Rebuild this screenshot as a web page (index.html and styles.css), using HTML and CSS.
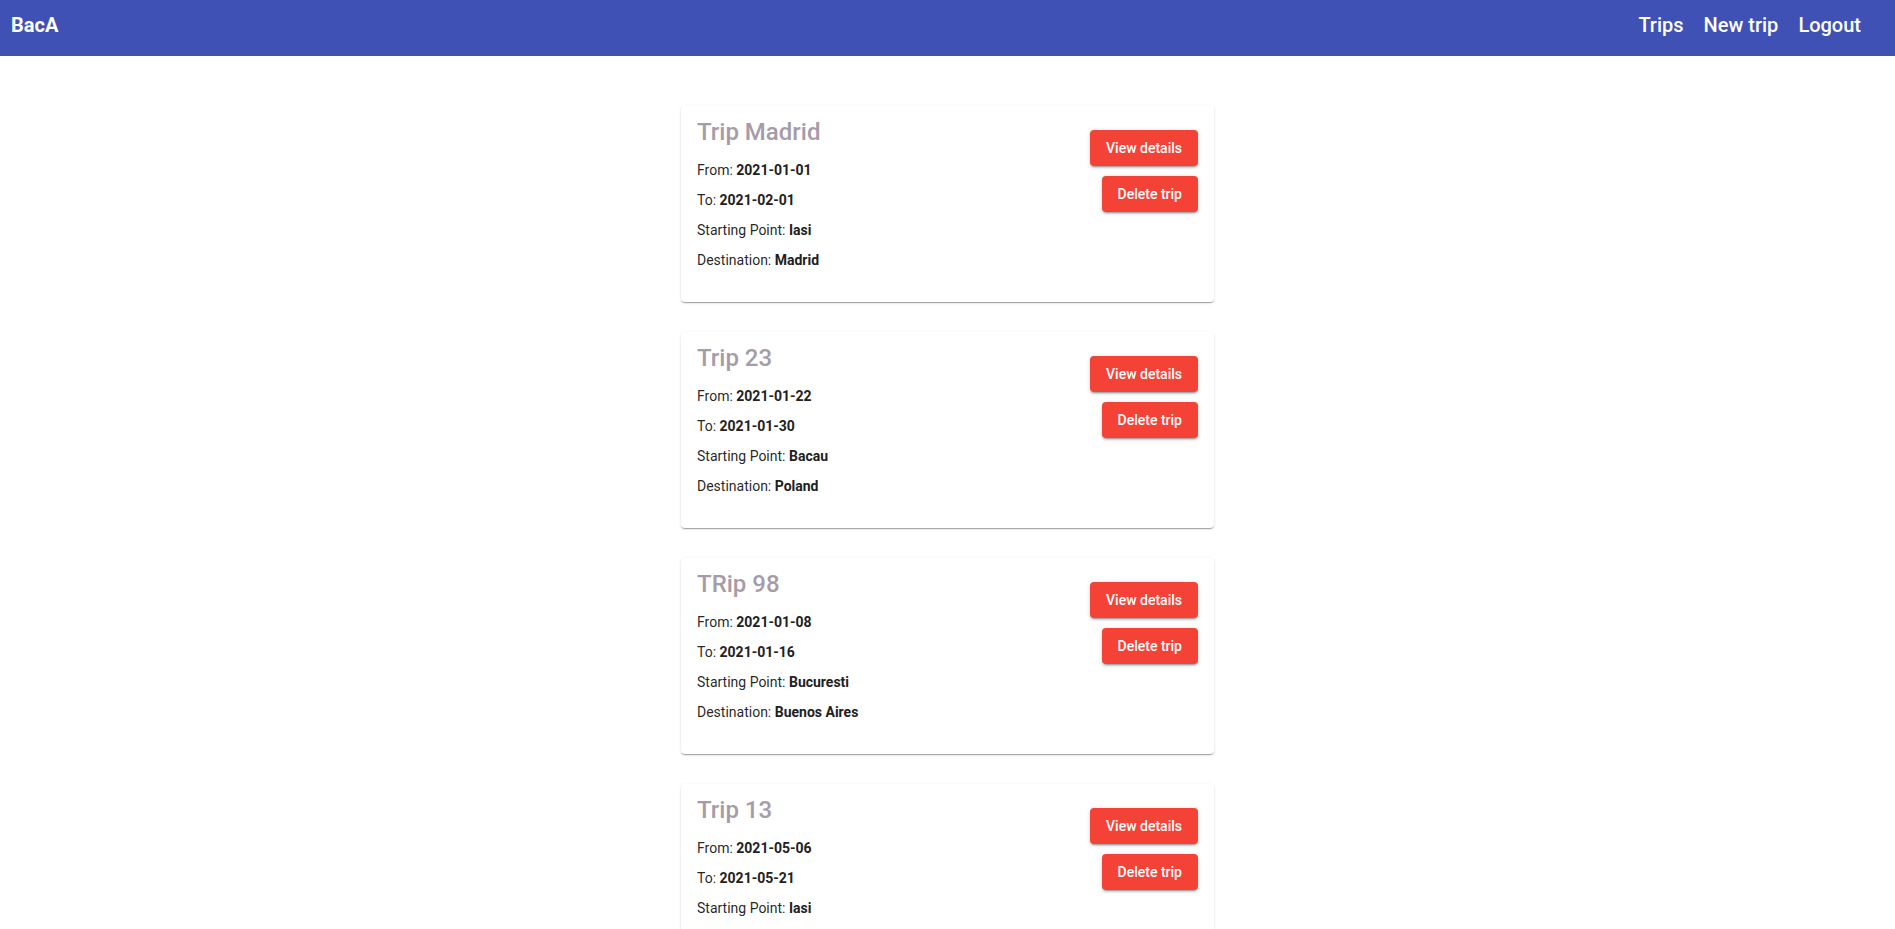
FILE: index.html
```html
<!DOCTYPE html>
<html lang="en">
<head>
<meta charset="utf-8">
<title>BacA</title>
<link rel="stylesheet" href="styles.css">
</head>
<body>
<header class="toolbar">
  <span class="brand">BacA</span>
  <nav class="nav">
    <a class="nav-link" href="#">Trips</a>
    <a class="nav-link" href="#">New trip</a>
    <a class="nav-link" href="#">Logout</a>
  </nav>
</header>
<main class="list">
  <div class="card">
    <div class="info">
      <h2 class="title">Trip Madrid</h2>
      <p>From: <b>2021-01-01</b></p>
      <p>To: <b>2021-02-01</b></p>
      <p>Starting Point: <b>Iasi</b></p>
      <p>Destination: <b>Madrid</b></p>
    </div>
    <div class="actions">
      <button class="btn">View details</button>
      <button class="btn">Delete trip</button>
    </div>
  </div>
  <div class="card">
    <div class="info">
      <h2 class="title">Trip 23</h2>
      <p>From: <b>2021-01-22</b></p>
      <p>To: <b>2021-01-30</b></p>
      <p>Starting Point: <b>Bacau</b></p>
      <p>Destination: <b>Poland</b></p>
    </div>
    <div class="actions">
      <button class="btn">View details</button>
      <button class="btn">Delete trip</button>
    </div>
  </div>
  <div class="card">
    <div class="info">
      <h2 class="title">TRip 98</h2>
      <p>From: <b>2021-01-08</b></p>
      <p>To: <b>2021-01-16</b></p>
      <p>Starting Point: <b>Bucuresti</b></p>
      <p>Destination: <b>Buenos Aires</b></p>
    </div>
    <div class="actions">
      <button class="btn">View details</button>
      <button class="btn">Delete trip</button>
    </div>
  </div>
  <div class="card">
    <div class="info">
      <h2 class="title">Trip 13</h2>
      <p>From: <b>2021-05-06</b></p>
      <p>To: <b>2021-05-21</b></p>
      <p>Starting Point: <b>Iasi</b></p>
      <p>Destination: <b>Madrid</b></p>
    </div>
    <div class="actions">
      <button class="btn">View details</button>
      <button class="btn">Delete trip</button>
    </div>
  </div>
</main>
</body>
</html>
```
FILE: styles.css
```css
* { box-sizing: border-box; }
html, body { margin: 0; padding: 0; }
body {
  font-family: Roboto, "Liberation Sans", Arial, sans-serif;
  background: #fff;
  color: rgba(0,0,0,0.87);
}
.toolbar {
  height: 56px;
  background: #3f51b5;
  color: #fff;
  display: flex;
  align-items: flex-start;
  justify-content: space-between;
  padding: 13px 34px 0 11px;
}
.brand {
  font-size: 20px;
  line-height: 24px;
  font-weight: 700;
}
.nav {
  display: flex;
  gap: 20px;
}
.nav-link {
  color: #fff;
  text-decoration: none;
  font-size: 20px;
  line-height: 24px;
  font-weight: 500;
}
.list {
  width: 533px;
  margin: 50px auto 0;
  display: flex;
  flex-direction: column;
  gap: 30px;
  padding-bottom: 30px;
}
.card {
  background: #fff;
  border-radius: 4px;
  box-shadow: 0 2px 1px -1px rgba(0,0,0,.2), 0 1px 1px 0 rgba(0,0,0,.14), 0 1px 3px 0 rgba(0,0,0,.12);
  padding: 10px 16px 32px;
  display: flex;
  justify-content: space-between;
  align-items: flex-start;
}
.title {
  margin: 0 0 12px;
  font-size: 24px;
  line-height: 32px;
  font-weight: 500;
  color: #a59ca8;
}
.info p {
  margin: 0 0 10px;
  font-size: 14px;
  line-height: 20px;
}
.info p:last-child { margin-bottom: 0; }
.info b { font-weight: 700; color: #212121; }
.actions {
  margin-top: 14px;
  display: flex;
  flex-direction: column;
  align-items: flex-end;
  gap: 10px;
}
.btn {
  font-family: Roboto, "Liberation Sans", Arial, sans-serif;
  background: #f44336;
  color: #fff;
  border: none;
  border-radius: 4px;
  height: 36px;
  padding: 0 16px;
  font-size: 14px;
  font-weight: 500;
  line-height: 36px;
  box-shadow: 0 3px 1px -2px rgba(0,0,0,.2), 0 2px 2px 0 rgba(0,0,0,.14), 0 1px 5px 0 rgba(0,0,0,.12);
  cursor: pointer;
}
```
